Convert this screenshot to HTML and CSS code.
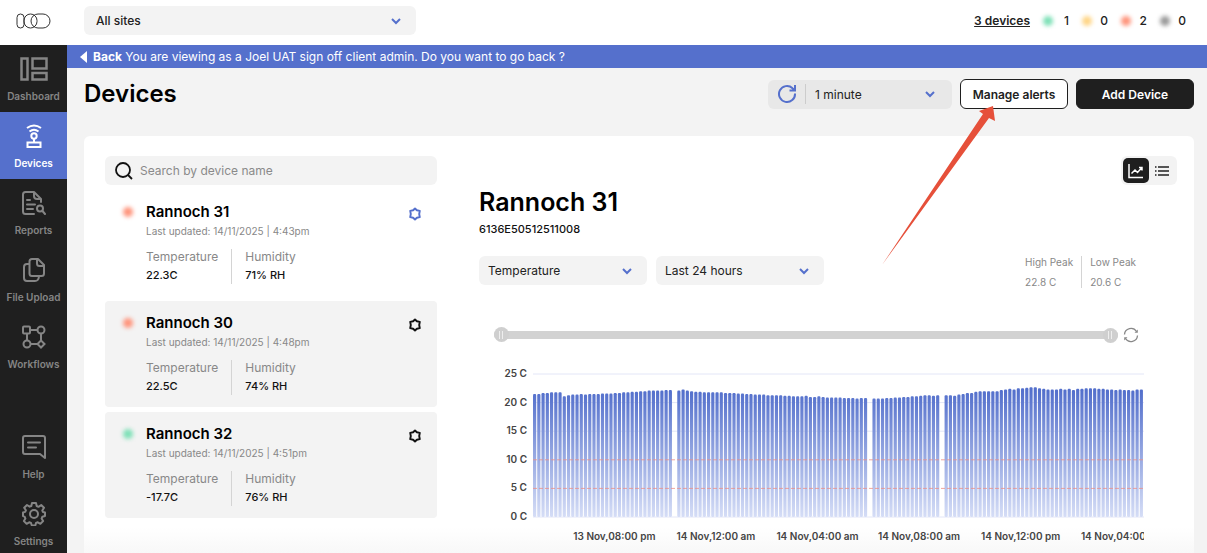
FILE: index.html
```html
<!DOCTYPE html>
<html lang="en">
<head>
    <meta charset="utf-8">
    <title>Devices</title>
    <link rel="stylesheet" href="styles.css">
</head>
<body>
    <svg class="symbols" aria-hidden="true">
        <symbol id="chevron" viewBox="0 0 12 12">
            <path d="M2 4l4 4 4-4" fill="none" stroke="currentColor" stroke-width="2"/>
        </symbol>
        <symbol id="cog" viewBox="0 0 14 14">
            <path d="M7 1.500L8.900 3.300 11.800 3.900 11.200 7 11.800 10.100 8.900 10.700 7 12.500 5.100 10.700 2.200 10.100 2.800 7 2.200 3.900 5.100 3.300z" fill="none" stroke="currentColor" stroke-width="1.900" stroke-linejoin="round"/>
        </symbol>
    </svg>

    <header class="topbar">
        <a href="#" class="logo" aria-label="Home">
            <svg width="36" height="16" viewBox="0 0 36 16" fill="none" stroke="#333" stroke-width="1">
                <rect x="1" y="1" width="7" height="14" rx="3.500"/>
                <rect x="8" y="1" width="13" height="14" rx="6.500"/>
                <rect x="15" y="1" width="19" height="14" rx="7"/>
            </svg>
        </a>
        <div class="select site-select">
            <select aria-label="Site"><option>All sites</option></select>
            <svg class="chevron"><use href="#chevron"/></svg>
        </div>
        <div class="status">
            <a href="#" class="status-link">3 devices</a>
            <span class="status-item"><i class="dot green"></i>1</span>
            <span class="status-item"><i class="dot yellow"></i>0</span>
            <span class="status-item"><i class="dot red"></i>2</span>
            <span class="status-item"><i class="dot grey"></i>0</span>
        </div>
    </header>

    <div class="layout">
        <nav class="sidebar">
            <a href="#" class="nav-item">
                <svg width="28" height="24" viewBox="0 0 28 24" fill="none" stroke="currentColor" stroke-width="2.500">
                    <rect x="1.500" y="1.500" width="6" height="21"/>
                    <rect x="12.500" y="1.500" width="14" height="10"/>
                    <rect x="12.500" y="16" width="14" height="6.500"/>
                </svg>
                Dashboard
            </a>
            <a href="#" class="nav-item active">
                <svg width="24" height="24" viewBox="0 0 24 24" fill="none" stroke="currentColor" stroke-width="2">
                    <path d="M5 4q7-5 14 0M7.500 7.500q4.500-3.500 9 0"/>
                    <circle cx="12" cy="12" r="2.700"/>
                    <path d="M12 15v4"/>
                    <rect x="5.500" y="18.500" width="13" height="4.500"/>
                </svg>
                Devices
            </a>
            <a href="#" class="nav-item">
                <svg width="24" height="24" viewBox="0 0 24 24" fill="none" stroke="currentColor" stroke-width="2" stroke-linecap="round" stroke-linejoin="round">
                    <path d="M12 23H3.500Q1 23 1 20.500v-17Q1 1 3.500 1H12l7 7v3M12 1v4q0 3 3 3h4M5 9h3M5 13.500h8M5 18h6"/>
                    <circle cx="18" cy="17.500" r="3"/>
                    <path d="M20.500 20l2.500 3"/>
                </svg>
                Reports
            </a>
            <a href="#" class="nav-item">
                <svg width="22" height="24" viewBox="0 0 22 24" fill="none" stroke="currentColor" stroke-width="2" stroke-linejoin="round">
                    <path d="M9 1h6l6 6v8.500q0 2.500-2.500 2.500H9q-2.500 0-2.500-2.500v-12Q6.500 1 9 1zM14 1v4.500Q14 8 16.500 8H21"/>
                    <path d="M6.500 6H4Q1 6 1 9v11q0 3 3 3h8q3.500 0 4-4.500"/>
                </svg>
                File Upload
            </a>
            <a href="#" class="nav-item">
                <svg width="24" height="24" viewBox="0 0 24 24" fill="none" stroke="currentColor" stroke-width="2">
                    <rect x="1" y="1.500" width="7" height="7" rx="1"/>
                    <circle cx="19" cy="5" r="3.500"/>
                    <circle cx="5" cy="19" r="3.500"/>
                    <path d="M19 15.500l3.500 3.500-3.500 3.500-3.500-3.500zM8 5h7.500M5 9v6.500M19 8.500v7M8.500 19h7"/>
                </svg>
                Workflows
            </a>
            <a href="#" class="nav-item nav-bottom">
                <svg width="24" height="24" viewBox="0 0 24 24" fill="none" stroke="currentColor" stroke-width="2" stroke-linejoin="round" stroke-linecap="round">
                    <path d="M3 1h18q2 0 2 2v20l-5-4H3q-2 0-2-2V3q0-2 2-2zM6 7.500h12M6 12.500h8"/>
                </svg>
                Help
            </a>
            <a href="#" class="nav-item">
                <svg width="24" height="24" viewBox="0 0 24 24" fill="none" stroke="currentColor" stroke-width="2" stroke-linejoin="round">
                    <path d="M10 1h4l.7 3 1.800.8L19.200 3 22 5.800l-1.700 2.700.7 1.500 2 .500v3.500l-2.600.7-.800 1.900 1.500 2.500-2.700 2.700-2.600-1.500-1.800.7-.700 2.500h-3.500l-.8-2.500-1.800-.7-2.600 1.500-2.700-2.700 1.500-2.500-.8-1.900L1 14v-3.500l2.200-.6.700-1.600L2.200 5.700 5 3l2.600 1.700L9.300 4z"/>
                    <circle cx="12" cy="12" r="4"/>
                </svg>
                Settings
            </a>
        </nav>

        <main class="main">
            <a href="#" class="banner">
                <svg width="7" height="12" viewBox="0 0 7 12"><path d="M7 0v12L0 6z" fill="#fff"/></svg>
                <span><b>Back</b> You are viewing as a Joel UAT sign off client admin. Do you want to go back ?</span>
            </a>

            <div class="page-head">
                <h1>Devices</h1>
                <div class="refresh">
                    <button class="refresh-button" aria-label="Refresh">
                        <svg width="20" height="20" viewBox="0 0 20 20" fill="none" stroke="currentColor" stroke-width="2">
                            <path d="M18 9.500A8 8 0 1 1 15.500 4.200L17.500 6M18 1v5.500h-5.500"/>
                        </svg>
                    </button>
                    <div class="select refresh-select">
                        <select aria-label="Refresh interval"><option>1 minute</option></select>
                        <svg class="chevron"><use href="#chevron"/></svg>
                    </div>
                </div>
                <button class="button">Manage alerts</button>
                <button class="button dark">Add Device</button>
            </div>

            <div class="panel">
                <section class="device-list">
                    <label class="search">
                        <svg width="18" height="18" viewBox="0 0 18 18" fill="none" stroke="#111" stroke-width="1.800">
                            <circle cx="8" cy="8" r="7"/>
                            <path d="M13 13l4 4"/>
                        </svg>
                        <input type="text" placeholder="Search by device name" aria-label="Search by device name">
                    </label>

                    <article class="device selected">
                        <i class="dot red"></i>
                        <div class="device-info">
                            <h3>Rannoch 31</h3>
                            <p class="updated">Last updated: 14/11/2025 | 4:43pm</p>
                            <dl class="readings">
                                <div><dt>Temperature</dt><dd>22.3C</dd></div>
                                <div><dt>Humidity</dt><dd>71% RH</dd></div>
                            </dl>
                        </div>
                        <button class="cog" aria-label="Device settings"><svg width="14" height="14"><use href="#cog"/></svg></button>
                    </article>

                    <article class="device">
                        <i class="dot red"></i>
                        <div class="device-info">
                            <h3>Rannoch 30</h3>
                            <p class="updated">Last updated: 14/11/2025 | 4:48pm</p>
                            <dl class="readings">
                                <div><dt>Temperature</dt><dd>22.5C</dd></div>
                                <div><dt>Humidity</dt><dd>74% RH</dd></div>
                            </dl>
                        </div>
                        <button class="cog" aria-label="Device settings"><svg width="14" height="14"><use href="#cog"/></svg></button>
                    </article>

                    <article class="device">
                        <i class="dot green"></i>
                        <div class="device-info">
                            <h3>Rannoch 32</h3>
                            <p class="updated">Last updated: 14/11/2025 | 4:51pm</p>
                            <dl class="readings">
                                <div><dt>Temperature</dt><dd>-17.7C</dd></div>
                                <div><dt>Humidity</dt><dd>76% RH</dd></div>
                            </dl>
                        </div>
                        <button class="cog" aria-label="Device settings"><svg width="14" height="14"><use href="#cog"/></svg></button>
                    </article>
                </section>

                <section class="detail">
                    <div class="view-toggle">
                        <button class="view active" aria-label="Chart view">
                            <svg width="16" height="16" viewBox="0 0 16 16" fill="none" stroke="currentColor" stroke-width="1.500">
                                <path d="M1 1v13.500h14M3.500 10.500L7 7l2.500 2.500L14 4.500M11 4.500h3v3"/>
                            </svg>
                        </button>
                        <button class="view" aria-label="List view">
                            <svg width="16" height="12" viewBox="0 0 16 12" fill="none" stroke="currentColor" stroke-width="1.500">
                                <path d="M1 2h1.500M4 2h11M1 6h1.500M4 6h11M1 10h1.500M4 10h11"/>
                            </svg>
                        </button>
                    </div>
                    <h2>Rannoch 31</h2>
                    <p class="serial">6136E50512511008</p>

                    <div class="filters">
                        <div class="select filter">
                            <select aria-label="Reading"><option>Temperature</option></select>
                            <svg class="chevron"><use href="#chevron"/></svg>
                        </div>
                        <div class="select filter">
                            <select aria-label="Period"><option>Last 24 hours</option></select>
                            <svg class="chevron"><use href="#chevron"/></svg>
                        </div>
                        <dl class="peaks">
                            <div><dt>High Peak</dt><dd>22.8 C</dd></div>
                            <div><dt>Low Peak</dt><dd>20.6 C</dd></div>
                        </dl>
                    </div>

                    <div class="zoom-row">
                        <div class="zoom-range">
                            <input type="range" class="range range-start" min="0" max="100" value="0" aria-label="Range start">
                            <input type="range" class="range" min="0" max="100" value="100" aria-label="Range end">
                        </div>
                        <button class="reset" aria-label="Reset range">
                            <svg width="16" height="16" viewBox="0 0 16 16" fill="none" stroke="currentColor" stroke-width="1.300">
                                <path d="M1.500 7.500A6.500 6.500 0 0 1 13.500 4.500M14.500 8.500A6.500 6.500 0 0 1 2.500 11.500"/>
                                <path d="M14.800 2.500v3.300h-3.300zM1.200 13.500v-3.300h3.300z" fill="currentColor" stroke="none"/>
                            </svg>
                        </button>
                    </div>

                    <div class="chart">
                        <div class="y-axis">
                            <span>25 C</span><span>20 C</span><span>15 C</span><span>10 C</span><span>5 C</span><span>0 C</span>
                        </div>
                        <svg id="plot" class="plot" viewBox="0 0 144 25" preserveAspectRatio="none">
                            <defs>
                                <linearGradient id="barFill" gradientUnits="userSpaceOnUse" x1="0" y1="3" x2="0" y2="25">
                                    <stop offset="0" stop-color="#5470cc"/>
                                    <stop offset="1" stop-color="#d5ddf6"/>
                                </linearGradient>
                            </defs>
                            <path class="grid-line" d="M0 0h144M0 5h144M0 10h144M0 25h144"/>
                            <g id="bars" fill="url(#barFill)"></g>
                            <path class="limit-line" d="M0 15h144M0 20h144"/>
                        </svg>
                        <div class="x-axis">
                            <span>13 Nov,08:00 pm</span><span>14 Nov,12:00 am</span><span>14 Nov,04:00 am</span><span>14 Nov,08:00 am</span><span>14 Nov,12:00 pm</span><span>14 Nov,04:00 pm</span>
                        </div>
                    </div>
                </section>
            </div>
        </main>
    </div>

    <svg class="pointer" width="114" height="160" viewBox="0 0 114 160" aria-hidden="true">
        <path d="M0 159L101 8l-4-3 14-5 2 15-6-3z" fill="#e6503a"/>
    </svg>

    <script src="chart.js"></script>
</body>
</html>
```
FILE: styles.css
```css
* {
    box-sizing: border-box;
}

body {
    display: flex;
    flex-direction: column;
    height: 100vh;
    margin: 0;
    overflow: hidden;
    font-family: Inter, "Liberation Sans", sans-serif;
    font-size: 12px;
    color: #222;
    background-color: #f3f3f3;
}

h1, h2, h3, p, dl, dd {
    margin: 0;
}

button, input, select {
    font: inherit;
    color: inherit;
}

button {
    padding: 0;
    border: none;
    background: none;
    cursor: pointer;
}

a {
    color: inherit;
    text-decoration: none;
}

svg {
    display: block;
    flex: none;
}

.symbols {
    position: absolute;
    width: 0;
    height: 0;
}

.topbar {
    display: flex;
    flex: none;
    align-items: center;
    height: 45px;
    padding-right: 21px;
    padding-bottom: 4px;
    background-color: #fff;
}

.logo {
    display: flex;
    justify-content: center;
    width: 67px;
}

.select {
    display: grid;
    align-items: center;
    height: 29px;
    border-radius: 6px;
    background-color: #f3f3f3;
}

.select select {
    grid-area: 1 / 1;
    width: 100%;
    height: 100%;
    padding: 0 30px 0 9px;
    border: none;
    background: none;
    appearance: none;
}

.chevron {
    grid-area: 1 / 1;
    justify-self: end;
    width: 12px;
    height: 12px;
    margin-right: 14px;
    color: #5570cc;
    pointer-events: none;
}

.site-select {
    width: 332px;
    margin-left: 17px;
    font-weight: 500;
}

.site-select select {
    padding-left: 12px;
}

.status {
    display: flex;
    align-items: center;
    gap: 13px;
    margin-left: auto;
    font-weight: 500;
}

.status-link {
    font-weight: 600;
    text-decoration: underline;
}

.status-item {
    display: flex;
    align-items: center;
    justify-content: space-between;
    width: 26px;
}

.dot {
    flex: none;
    width: 10px;
    height: 10px;
    border-radius: 50%;
    filter: blur(2px);
}

.green {
    background-color: #7ce0b6;
}

.yellow {
    background-color: #ffd585;
}

.red {
    background-color: #ff937a;
}

.grey {
    background-color: #999;
}

.layout {
    display: flex;
    flex: 1;
    min-height: 0;
}

.sidebar {
    display: flex;
    flex: none;
    flex-direction: column;
    width: 67px;
    background-color: #1f1f1f;
}

.nav-item {
    display: flex;
    flex: none;
    flex-direction: column;
    align-items: center;
    gap: 8px;
    height: 67px;
    padding-top: 12px;
    font-size: 10px;
    font-weight: 600;
    line-height: 14px;
    white-space: nowrap;
    color: #858585;
}

.nav-item.active {
    color: #fff;
    background-color: #5570cc;
}

.nav-bottom {
    margin-top: 43px;
}

.main {
    display: flex;
    flex: 1;
    flex-direction: column;
    min-width: 0;
}

.banner {
    display: flex;
    flex: none;
    align-items: center;
    gap: 6px;
    height: 23px;
    padding-left: 13px;
    color: #fff;
    background-color: #5570cc;
}

.page-head {
    display: flex;
    flex: none;
    align-items: center;
    gap: 8px;
    padding: 11px 13px 27px 17px;
}

h1 {
    margin-right: auto;
    font-size: 24px;
    font-weight: 600;
    line-height: 30px;
    color: #000;
}

.refresh {
    display: flex;
    align-items: center;
    width: 184px;
    height: 29px;
    padding-left: 9px;
    border-radius: 6px;
    background-color: #e8e8e8;
}

.refresh-button {
    padding-right: 8px;
    border-right: 1px solid #ccc;
    color: #5570cc;
}

.refresh-select {
    flex: 1;
    background: none;
}

.refresh-select .chevron {
    margin-right: 16px;
}

.button {
    width: 108px;
    height: 30px;
    border: 1px solid #1f1f1f;
    border-radius: 6px;
    font-weight: 600;
    background-color: #fff;
}

.button.dark {
    width: 118px;
    color: #fff;
    background-color: #1f1f1f;
}

.panel {
    display: flex;
    flex: 1;
    gap: 42px;
    min-height: 0;
    margin: 0 13px 0 17px;
    padding: 20px 17px 0 21px;
    border-radius: 6px 6px 0 0;
    background: linear-gradient(to top, #f8f8f8, #fff 26px);
}

.device-list {
    display: flex;
    flex: none;
    flex-direction: column;
    gap: 5px;
    width: 332px;
}

.search {
    display: flex;
    flex: none;
    align-items: center;
    gap: 7px;
    height: 29px;
    padding: 0 10px;
    border-radius: 6px;
    background-color: #f3f3f3;
}

.search input {
    flex: 1;
    padding: 0;
    border: none;
    outline: none;
    background: none;
}

.search input::placeholder {
    color: #8a8a8a;
}

.device {
    display: flex;
    flex: none;
    align-items: flex-start;
    height: 106px;
    padding: 11px 15px 0 18px;
    border-radius: 4px;
    background-color: #f3f3f3;
}

.device.selected {
    background-color: transparent;
}

.device .dot {
    margin: 6px 13px 0 0;
}

.device-info {
    flex: 1;
}

h3 {
    font-size: 15px;
    font-weight: 600;
    line-height: 22px;
    color: #000;
}

.updated {
    font-size: 10px;
    line-height: 16px;
    color: #888;
}

.readings {
    display: flex;
    margin-top: 10px;
}

.readings div + div {
    margin-left: 13px;
    padding-left: 13px;
    border-left: 1px solid #d4d4d4;
}

.readings dt {
    line-height: 16px;
    color: #888;
}

.readings dd {
    padding-top: 2px;
    font-size: 11px;
    font-weight: 500;
    line-height: 17px;
    color: #111;
}

.cog {
    margin-top: 6px;
    color: #111;
}

.selected .cog {
    color: #5570cc;
}

.detail {
    flex: 1;
    min-width: 0;
}

.view-toggle {
    display: flex;
    width: 56px;
    height: 29px;
    margin-left: auto;
    padding: 2px;
    border-radius: 6px;
    background-color: #f3f3f3;
}

.view {
    display: flex;
    flex: 1;
    align-items: center;
    justify-content: center;
    border-radius: 5px;
}

.view.active {
    color: #fff;
    background-color: #1f1f1f;
}

h2 {
    font-size: 25px;
    font-weight: 600;
    line-height: 34px;
    color: #000;
}

.serial {
    font-size: 11px;
    line-height: 20px;
    font-weight: 500;
    color: #111;
}

.filters {
    display: flex;
    align-items: flex-start;
    gap: 9px;
    margin-top: 17px;
    padding-right: 41px;
}

.filter {
    width: 168px;
}

.peaks {
    display: flex;
    margin-left: auto;
    font-size: 10px;
    white-space: nowrap;
    color: #888;
}

.peaks div + div {
    margin-left: 8px;
    padding-left: 8px;
    border-left: 1px solid #d4d4d4;
}

.peaks dt {
    line-height: 12px;
}

.peaks dd {
    padding-top: 8px;
    line-height: 12px;
}

.zoom-row {
    display: flex;
    align-items: center;
    gap: 5px;
    margin-top: 39px;
    padding: 0 38px 0 15px;
}

.zoom-range {
    display: grid;
    flex: 1;
}

.range {
    grid-area: 1 / 1;
    width: 100%;
    height: 16px;
    margin: 0;
    background: none;
    appearance: none;
    pointer-events: none;
}

.range-start::-webkit-slider-runnable-track {
    height: 8px;
    border-radius: 4px;
    background-color: #d2d2d2;
}

.range::-webkit-slider-thumb {
    width: 15px;
    height: 15px;
    border-radius: 50%;
    background: linear-gradient(to right, transparent 5px, #eee 5px 6px, transparent 6px 8px, #eee 8px 9px, transparent 9px) center / 15px 8px no-repeat #cfcfcf;
    appearance: none;
    pointer-events: auto;
}

.range-start::-webkit-slider-thumb {
    margin-top: -4px;
}

.reset {
    color: #888;
}

.chart {
    display: grid;
    grid-template-columns: 48px 1fr;
    column-gap: 6px;
    margin-top: 31px;
    padding-right: 33px;
    font-size: 10px;
    font-weight: 600;
    color: #444;
}

.y-axis {
    display: flex;
    flex-direction: column;
    justify-content: space-between;
    margin: -7px 0 -5px;
    line-height: 12px;
    text-align: right;
}

.plot {
    width: 100%;
    height: 143px;
    overflow: visible;
}

.grid-line {
    stroke: #e3e6f7;
    vector-effect: non-scaling-stroke;
}

.limit-line {
    stroke: #ec8f86;
    stroke-opacity: 0.8;
    stroke-dasharray: 4 2;
    vector-effect: non-scaling-stroke;
}

.x-axis {
    display: flex;
    grid-column: 2;
    margin-top: 11px;
    padding-left: 5%;
    overflow: hidden;
    line-height: 16px;
    text-align: center;
    white-space: nowrap;
}

.x-axis span {
    flex: 0 0 17.5%;
}

.pointer {
    position: absolute;
    top: 106px;
    left: 882px;
    pointer-events: none;
}
```
FILE: chart.js
```js
// one reading every ten minutes, null where the device sent nothing
var readings = [
    21.5, 21.5, 21.7, 21.7, 21.8, 21.8, 21.8, 21.1, 21.3, 21.4, 21.4, 21.5,
    21.4, 21.5, 21.5, 21.5, 21.6, 21.6, 21.6, 21.7, 21.7, 21.8, 21.8, 21.9,
    21.9, 22.0, 22.0, 22.1, 22.1, 22.1, 22.1, 22.2, 22.2, null, 22.1, 22.3,
    22.1, 22.0, 21.9, 21.9, 21.8, 21.8, 21.8, 21.8, 21.8, 21.7, 21.7, 21.7,
    21.6, 21.6, 21.5, 21.5, 21.4, 21.4, 21.4, 21.3, 21.3, 21.3, 21.3, 21.2,
    21.2, 21.1, 21.1, 21.1, 21.2, 21.0, 21.0, 21.1, 21.0, 20.9, 20.9, 20.9,
    20.9, 20.8, 20.8, 20.8, 20.7, 20.8, 20.8, null, 20.7, 20.7, 20.7, 20.8,
    20.8, 20.9, 20.9, 21.0, 21.0, 21.1, 21.1, 21.2, 21.3, 21.3, 21.2, 21.3,
    null, 21.3, 21.3, 21.2, 21.4, 21.5, 21.7, 21.7, 21.9, 22.0, 22.0, 22.0,
    22.0, 22.0, 22.2, 22.3, 22.4, 22.3, 22.5, 22.5, 22.6, 22.7, 22.7, 22.5,
    22.4, 22.3, 22.3, 22.3, 22.4, 22.3, 22.4, 22.2, 22.4, 22.4, 22.5, 22.5,
    22.5, 22.4, 22.4, 22.3, 22.3, 22.2, 22.3, 22.2, 22.2, 22.1, 22.3, 22.3
];

var bars = document.getElementById("bars");

readings.forEach(function (value, i) {
    if (value === null) {
        return;
    }
    var bar = document.createElementNS("http://www.w3.org/2000/svg", "rect");
    bar.setAttribute("x", i);
    bar.setAttribute("y", 25 - value);
    bar.setAttribute("width", 0.75);
    bar.setAttribute("height", value);
    bar.setAttribute("rx", 0.25);
    bars.appendChild(bar);
});
```
